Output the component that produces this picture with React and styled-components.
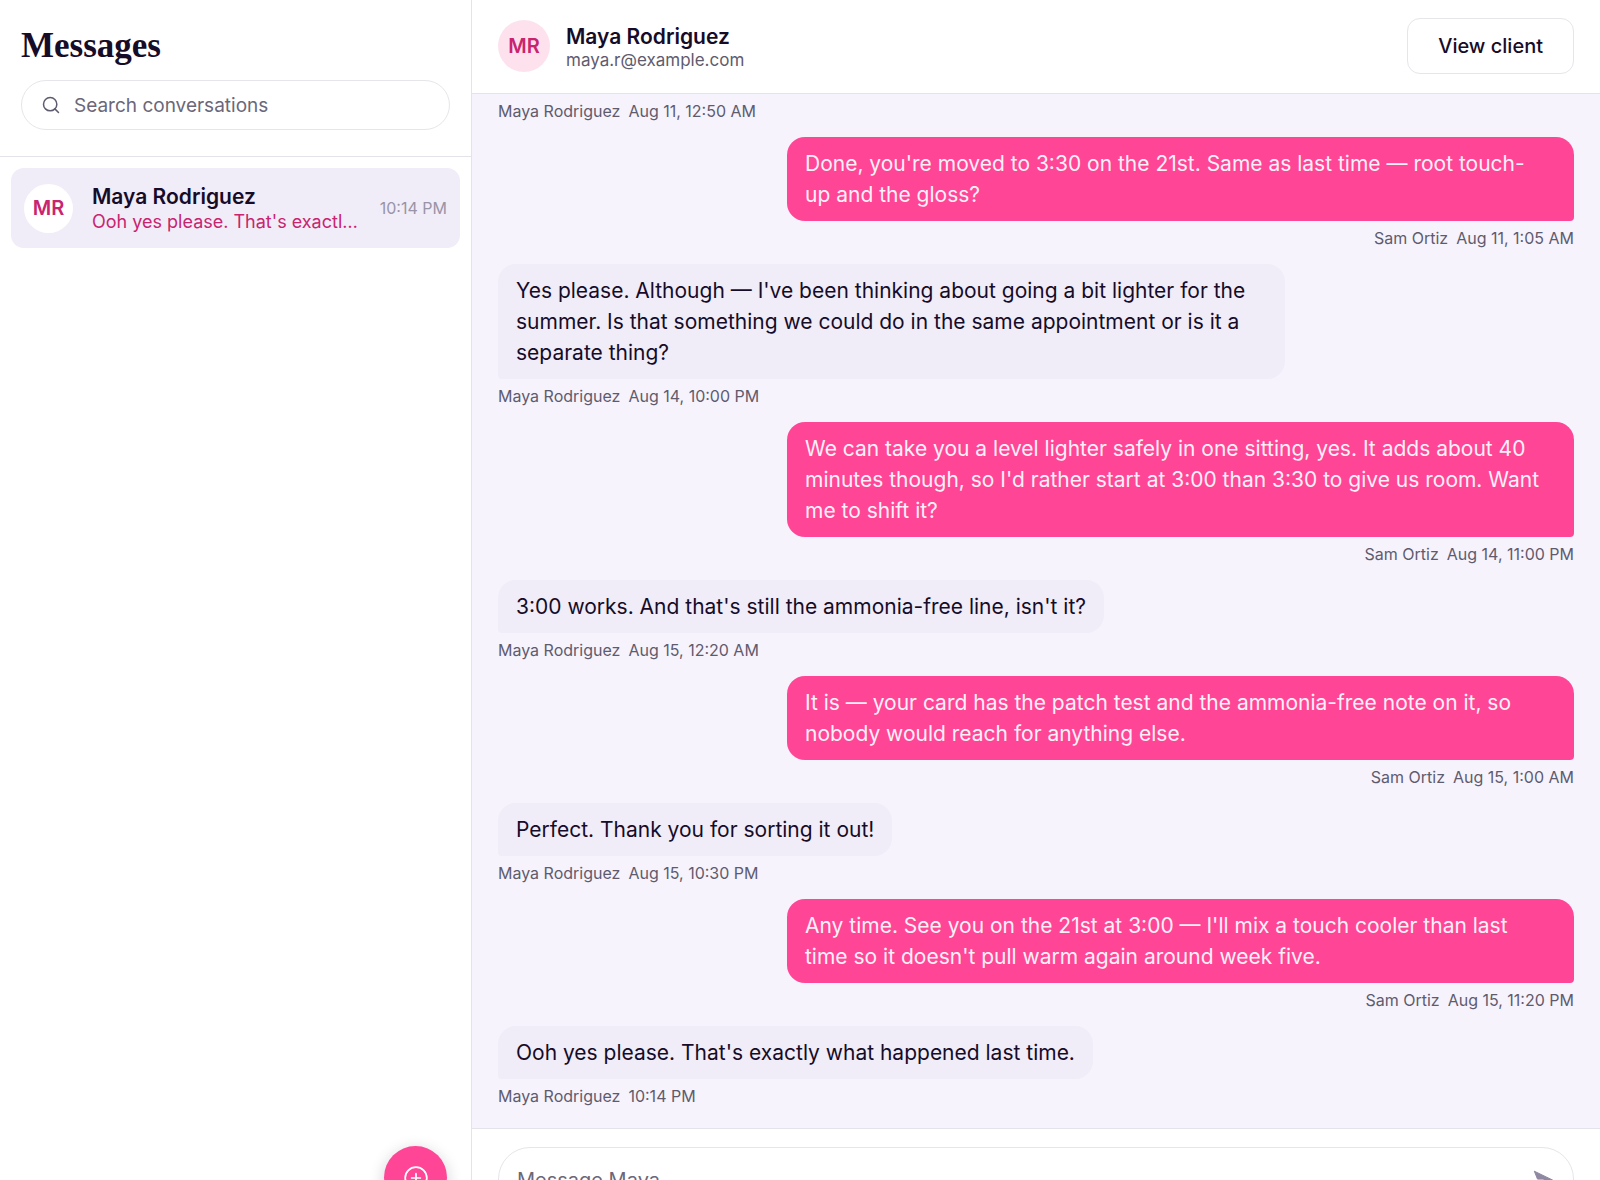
import React from 'react'
import styled, { createGlobalStyle, css } from 'styled-components'
import { Search, CirclePlus } from 'lucide-react'

const GlobalStyle = createGlobalStyle`
* {
    box-sizing: border-box;
}

body {
    margin: 0;
    overflow: hidden;
    background: #fff;
    color: #160c28;
    font-family: Inter, "Liberation Sans", sans-serif;
}

button, input {
    font-family: inherit;
    color: inherit;
}
`

const Page = styled.div`
display: flex;
height: calc(100vh + 53px);
overflow: hidden;
`

const Sidebar = styled.aside`
position: relative;
flex: 0 0 472px;
min-width: 0;
display: flex;
flex-direction: column;
border-right: 1px solid #e4e3ea;
background: #fff;
`

const SidebarTop = styled.div`
display: flex;
flex-direction: column;
gap: 12px;
padding: 24px 21px 26px;
border-bottom: 1px solid #e4e3ea;
`

const Title = styled.h1`
margin: 0;
font-family: "Liberation Serif", serif;
font-weight: 700;
font-size: 35px;
line-height: 44px;
`

const SearchBox = styled.label`
display: flex;
align-items: center;
gap: 13px;
height: 50px;
padding: 0 19px;
border: 1px solid #e6e5ea;
border-radius: 25px;
color: #5f5b6e;

input {
    flex: 1;
    min-width: 0;
    padding: 0;
    border: 0;
    outline: 0;
    background: none;
    font-size: 19px;
}

input::placeholder {
    color: #6b6779;
    opacity: 1;
}
`

const List = styled.ul`
margin: 0;
padding: 11px;
list-style: none;
`

const Conversation = styled.button`
display: flex;
align-items: center;
gap: 19px;
width: 100%;
height: 80px;
padding: 0 13px;
border: 0;
border-radius: 13px;
background: #f0ecf8;
text-align: left;
`

const Avatar = styled.span`
display: flex;
align-items: center;
justify-content: center;
flex: none;
width: ${props => props.$size}px;
height: ${props => props.$size}px;
border-radius: 50%;
background: ${props => props.$tint};
color: #c9246f;
font-weight: 600;
font-size: 20px;
`

const Summary = styled.span`
flex: 1;
min-width: 0;
display: flex;
flex-direction: column;
`

const Name = styled.span`
font-weight: 600;
font-size: 21px;
line-height: 28px;
`

const Preview = styled.span`
overflow: hidden;
white-space: nowrap;
text-overflow: ellipsis;
color: #c9246f;
font-size: 18px;
line-height: 22px;
`

const Time = styled.time`
flex: none;
color: #9994a6;
font-size: 16px;
`

const NewButton = styled.button`
position: absolute;
right: 24px;
bottom: 24px;
display: flex;
align-items: center;
justify-content: center;
width: 63px;
height: 63px;
padding: 0;
border: 0;
border-radius: 50%;
background: #ff4596;
color: #fff;
box-shadow: 0 4px 16px rgba(22, 12, 40, .2);
`

const Chat = styled.main`
flex: 1;
min-width: 0;
display: flex;
flex-direction: column;
background: #f6f3fc;
`

const ChatHeader = styled.header`
display: flex;
align-items: center;
gap: 16px;
flex: none;
height: 94px;
padding: 0 26px 1px;
border-bottom: 1px solid #e4e3ea;
background: #fff;
`

const Email = styled.span`
color: #5f5b6e;
font-size: 17px;
line-height: 18px;
`

const ViewButton = styled.button`
height: 56px;
padding: 0 30px;
border: 1px solid #e6e5ea;
border-radius: 13px;
background: #fff;
font-weight: 500;
font-size: 20px;
`

const Thread = styled.section`
flex: 1;
min-height: 0;
display: flex;
flex-direction: column;
justify-content: flex-end;
gap: 15px;
padding: 0 26px 21px;
overflow: hidden;
`

const Message = styled.article`
display: flex;
flex-direction: column;
flex: none;
gap: 7px;
align-items: ${props => (props.$mine ? 'flex-end' : 'flex-start')};
`

const Bubble = styled.p`
max-width: 787px;
margin: 0;
padding: 11px 18px;
border-radius: 18px;
font-size: 21px;
line-height: 31px;
${props => props.$mine ? css`
    padding-right: 26px;
    border-bottom-right-radius: 4px;
    background: #ff4596;
    color: #fff0f8;
` : css`
    border-bottom-left-radius: 4px;
    background: #f0ecf8;
`}
`

const Meta = styled.div`
display: flex;
gap: 8px;
color: #5f5b6e;
font-size: 16px;
line-height: 21px;
`

const Composer = styled.form`
flex: none;
padding: 18px 26px 20px;
border-top: 1px solid #e4e3ea;
background: #fff;
`

const ComposerBox = styled.div`
display: flex;
align-items: center;
height: 66px;
padding: 0 18px;
border: 1px solid #e6e5ea;
border-radius: 32px;

input {
    flex: 1;
    min-width: 0;
    padding: 0;
    border: 0;
    outline: 0;
    background: none;
    font-size: 20px;
}

input::placeholder {
    color: #6b6779;
    opacity: 1;
}
`

const SendButton = styled.button`
display: flex;
padding: 0;
border: 0;
background: none;
color: #8f88a3;
`

const messages = [
    { mine: true, text: "Done, you're moved to 3:30 on the 21st. Same as last time — root touch-up and the gloss?", time: 'Aug 11, 1:05 AM' },
    { text: "Yes please. Although — I've been thinking about going a bit lighter for the summer. Is that something we could do in the same appointment or is it a separate thing?", time: 'Aug 14, 10:00 PM' },
    { mine: true, text: "We can take you a level lighter safely in one sitting, yes. It adds about 40 minutes though, so I'd rather start at 3:00 than 3:30 to give us room. Want me to shift it?", time: 'Aug 14, 11:00 PM' },
    { text: "3:00 works. And that's still the ammonia-free line, isn't it?", time: 'Aug 15, 12:20 AM' },
    { mine: true, text: 'It is — your card has the patch test and the ammonia-free note on it, so nobody would reach for anything else.', time: 'Aug 15, 1:00 AM' },
    { text: 'Perfect. Thank you for sorting it out!', time: 'Aug 15, 10:30 PM' },
    { mine: true, text: "Any time. See you on the 21st at 3:00 — I'll mix a touch cooler than last time so it doesn't pull warm again around week five.", time: 'Aug 15, 11:20 PM' },
    { text: "Ooh yes please. That's exactly what happened last time.", time: '10:14 PM' },
]

function SendIcon() {
    return (
        <svg width="24" height="24" viewBox="0 0 24 24" fill="currentColor" stroke="currentColor" strokeLinejoin="round" aria-hidden="true">
            <path d="M3.300 3.200 21.500 12 3.300 20.800 6.500 12.900H13V11.100H6.500Z" />
        </svg>
    )
}

function MessageMeta({ name, time }) {
    return (
        <Meta>
            <span>{name}</span>
            <time>{time}</time>
        </Meta>
    )
}

function App() {
    return (
        <Page>
            <GlobalStyle />
            <Sidebar>
                <SidebarTop>
                    <Title>Messages</Title>
                    <SearchBox>
                        <Search size={20} strokeWidth={1.8} />
                        <input type="search" aria-label="Search conversations" placeholder="Search conversations" />
                    </SearchBox>
                </SidebarTop>
                <List>
                    <li>
                        <Conversation type="button">
                            <Avatar $size={49} $tint="#fff">MR</Avatar>
                            <Summary>
                                <Name>Maya Rodriguez</Name>
                                <Preview>Ooh yes please. That's exactly what happened last time.</Preview>
                            </Summary>
                            <Time>10:14 PM</Time>
                        </Conversation>
                    </li>
                </List>
                <NewButton type="button" aria-label="New message">
                    <CirclePlus size={26} strokeWidth={1.6} />
                </NewButton>
            </Sidebar>

            <Chat>
                <ChatHeader>
                    <Avatar $size={52} $tint="#fde2ee">MR</Avatar>
                    <Summary>
                        <Name>Maya Rodriguez</Name>
                        <Email>maya.r@example.com</Email>
                    </Summary>
                    <ViewButton type="button">View client</ViewButton>
                </ChatHeader>
                <Thread>
                    <MessageMeta name="Maya Rodriguez" time="Aug 11, 12:50 AM" />
                    {messages.map(message => (
                        <Message key={message.time} $mine={message.mine}>
                            <Bubble $mine={message.mine}>{message.text}</Bubble>
                            <MessageMeta name={message.mine ? 'Sam Ortiz' : 'Maya Rodriguez'} time={message.time} />
                        </Message>
                    ))}
                </Thread>
                <Composer>
                    <ComposerBox>
                        <input type="text" aria-label="Message Maya" placeholder="Message Maya…" />
                        <SendButton type="button" aria-label="Send">
                            <SendIcon />
                        </SendButton>
                    </ComposerBox>
                </Composer>
            </Chat>
        </Page>
    )
}

export default App
